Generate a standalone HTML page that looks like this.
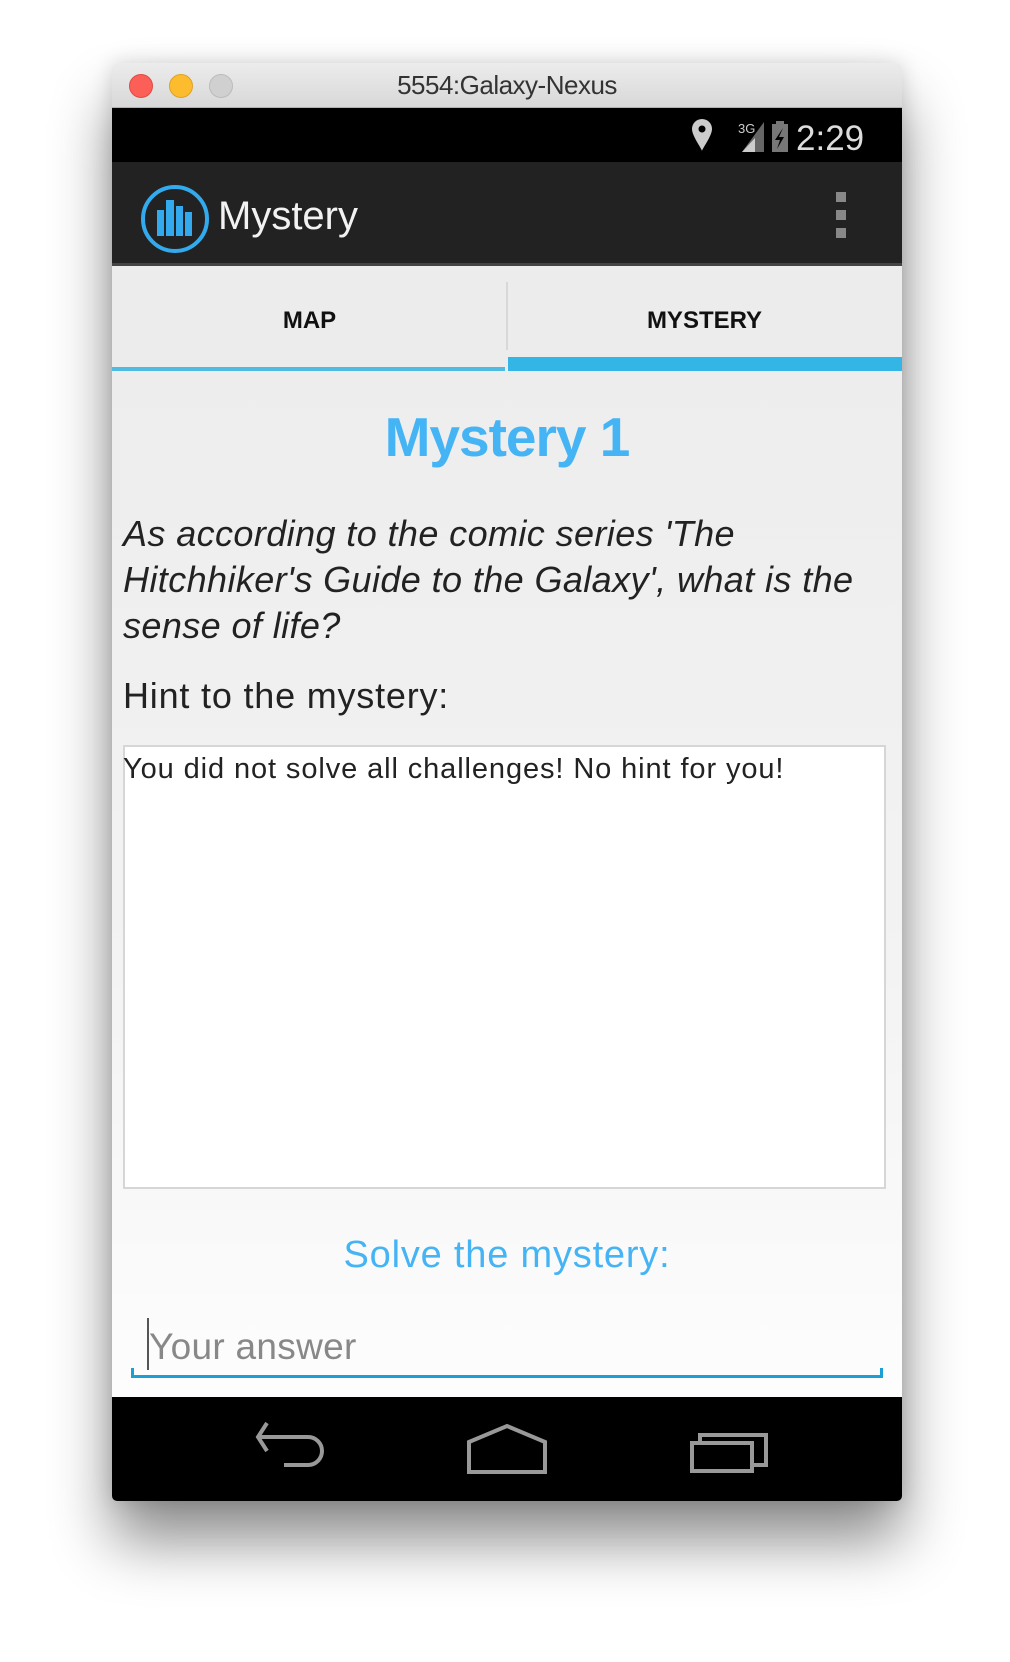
<!DOCTYPE html>
<html><head><meta charset="utf-8"><style>
*{margin:0;padding:0;box-sizing:border-box}
body{width:1010px;height:1662px;background:#fff;position:relative;overflow:hidden;font-family:"Liberation Sans",sans-serif}
.win{position:absolute;left:112px;top:63px;width:790px;height:1438px;border-radius:7px 7px 5px 5px;box-shadow:0 40px 60px rgba(0,0,0,0.45),0 0 20px rgba(0,0,0,0.15);overflow:hidden;background:#f0f0f0}
.title{position:absolute;left:0;top:0;width:790px;height:45px;background:linear-gradient(#ececec,#d8d8d8);border-bottom:1px solid #b0b0b0;text-align:center;font-size:26px;line-height:45px;color:#333;letter-spacing:-0.5px}
.dot{position:absolute;top:11px;width:24px;height:24px;border-radius:50%}
.status{position:absolute;left:0;top:45px;width:790px;height:54px;background:#000}
.abar{position:absolute;left:0;top:99px;width:790px;height:104px;background:#222;border-bottom:3px solid #444}
.tabs{position:absolute;left:0;top:203px;width:790px;height:105px;background:#ececec}
.content{position:absolute;left:0;top:308px;width:790px;height:1026px;background:linear-gradient(#ededed,#f3f3f3 600px,#fdfdfd)}
.nav{position:absolute;left:0;top:1334px;width:790px;height:104px;background:#000}
</style></head><body>
<div class="win">
 <div class="title">5554:Galaxy-Nexus
  <div class="dot" style="left:17px;background:#fc5f57;border:1px solid #de4a42"></div>
  <div class="dot" style="left:57px;background:#fdbc2e;border:1px solid #dea123"></div>
  <div class="dot" style="left:97px;background:#d0d0d0;border:1px solid #bbb"></div>
 </div>
 <div class="status">
  <svg style="position:absolute;left:580px;top:8px" width="210" height="42" viewBox="0 0 210 42">
   <path d="M10 3a10 10 0 0 1 10 10c0 7-10 20-10 22c0-2-10-15-10-22A10 10 0 0 1 10 3z" fill="#ccc"/><circle cx="10" cy="13" r="3.5" fill="#000"/>
   <text x="46" y="17" font-size="13" fill="#ccc" font-family="Liberation Sans">3G</text>
   <path d="M50 36L72 6V36Z" fill="#666"/><path d="M50 36L63 22V36Z" fill="#ccc"/>
   <rect x="80" y="8" width="16" height="28" fill="#777"/><rect x="84" y="5" width="8" height="4" fill="#777"/>
   <path d="M91 12L83 24h5l-3 9l7-12h-5z" fill="#000"/>
   <text x="104" y="34" font-size="35" fill="#ddd" font-family="Liberation Sans">2:29</text>
  </svg>
 </div>
 <div class="abar">
  <svg style="position:absolute;left:28px;top:22px" width="70" height="70" viewBox="0 0 70 70">
   <circle cx="35" cy="35" r="32" fill="none" stroke="#33aaee" stroke-width="4"/>
   <rect x="17" y="26" width="7" height="26" fill="#33aaee"/><rect x="26" y="16" width="8" height="36" fill="#33aaee"/>
   <rect x="36" y="22" width="7" height="30" fill="#33aaee"/><rect x="45" y="28" width="7" height="24" fill="#33aaee"/>
  </svg>
  <div style="position:absolute;left:106px;top:32px;font-size:40px;color:#f2f2f2">Mystery</div>
  <div style="position:absolute;left:724px;top:30px;width:10px;height:10px;background:#888"></div>
  <div style="position:absolute;left:724px;top:48px;width:10px;height:10px;background:#888"></div>
  <div style="position:absolute;left:724px;top:66px;width:10px;height:10px;background:#888"></div>
 </div>
 <div class="tabs">
  <div style="position:absolute;left:0;width:395px;top:41px;text-align:center;font-weight:bold;font-size:24px;color:#111">MAP</div>
  <div style="position:absolute;left:395px;width:395px;top:41px;text-align:center;font-weight:bold;font-size:24px;color:#111">MYSTERY</div>
  <div style="position:absolute;left:394px;top:16px;width:2px;height:68px;background:#d8d8d8"></div>
  <div style="position:absolute;left:0;top:101px;width:393px;height:4px;background:#4fbbe0"></div>
  <div style="position:absolute;left:396px;top:91px;width:394px;height:14px;background:#33b5e5"></div>
 </div>
 <div class="content">
  <div style="position:absolute;left:0;width:790px;top:34px;text-align:center;font-weight:bold;font-size:55px;color:#45b4f5;letter-spacing:-1px">Mystery 1</div>
  <div style="position:absolute;left:11px;top:140px;font-style:italic;font-size:36px;line-height:46px;color:#222;letter-spacing:0.4px;white-space:nowrap">As according to the comic series 'The<br>Hitchhiker's Guide to the Galaxy', what is the<br>sense of life?</div>
  <div style="position:absolute;left:11px;top:304px;font-size:36px;color:#222;letter-spacing:0.8px">Hint to the mystery:</div>
  <div style="position:absolute;left:11px;top:374px;width:763px;height:444px;background:#fff;border:2px solid #d6d6d6"></div>
  <div style="position:absolute;left:11px;top:382px;font-size:29px;color:#222;letter-spacing:0.9px;white-space:nowrap">You did not solve all challenges! No hint for you!</div>
  <div style="position:absolute;left:0;width:790px;top:863px;text-align:center;font-size:38px;color:#45b4f5;letter-spacing:0.8px">Solve the mystery:</div>
  <div style="position:absolute;left:35px;top:947px;width:1.5px;height:52px;background:#555"></div>
  <div style="position:absolute;left:37px;top:955px;font-size:37px;color:#888;letter-spacing:0.3px">Your answer</div>
  <div style="position:absolute;left:19px;top:1004px;width:752px;height:3px;background:#1ba0d6"></div>
  <div style="position:absolute;left:19px;top:997px;width:3px;height:10px;background:#1ba0d6"></div>
  <div style="position:absolute;left:768px;top:997px;width:3px;height:10px;background:#1ba0d6"></div>
 </div>
 <div class="nav">
  <svg width="790" height="104" viewBox="0 0 790 104">
   <g fill="none" stroke="#999" stroke-width="4">
    <path d="M148 40H196a14 14 0 0 1 0 28H172"/><path d="M155 26l-9 14l9 14"/>
    <path d="M357 75V45L395 29L433 45V75Z"/>
    <path d="M580 74V46H640V74Z"/><path d="M588 46V38H654V68H640"/>
   </g>
  </svg>
 </div>
</div>
</body></html>
